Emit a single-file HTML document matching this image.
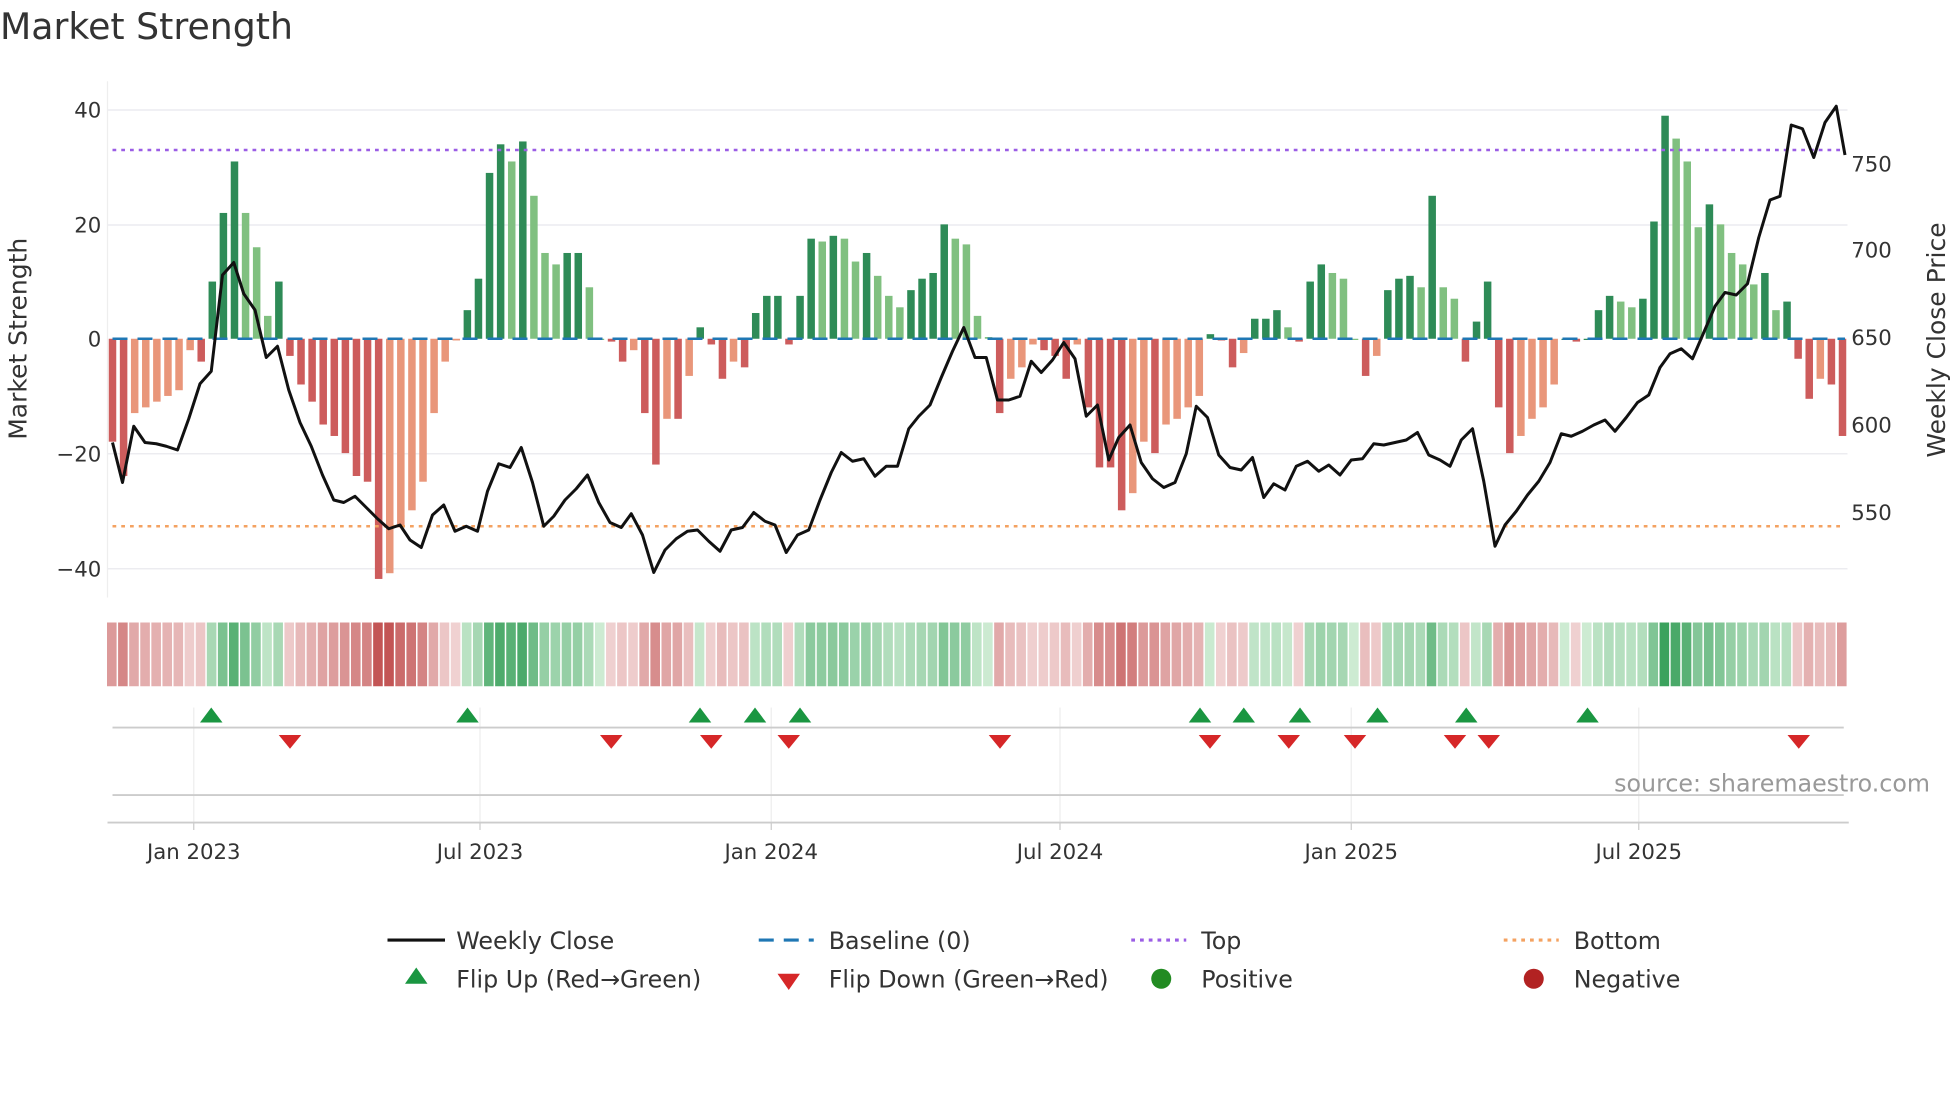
<!DOCTYPE html>
<html><head><meta charset="utf-8"><style>
html,body{margin:0;padding:0;background:#fff;width:1960px;height:1102px;overflow:hidden}
svg{display:block}
text{font-family:"DejaVu Sans","Liberation Sans",sans-serif;fill:#333}
</style></head><body>
<svg id="s" width="1960" height="1102" viewBox="0 0 1568 881.6" xmlns="http://www.w3.org/2000/svg">
<text x="0" y="31" font-size="29" fill="#333">Market Strength</text>
<line x1="86" y1="65" x2="86" y2="478" stroke="#eee" stroke-width="1"/>
<g stroke="#ececf0" stroke-width="1.2">
<line x1="86" y1="88" x2="1478" y2="88"/><line x1="86" y1="180" x2="1478" y2="180"/>
<line x1="86" y1="363" x2="1478" y2="363"/><line x1="86" y1="455" x2="1478" y2="455"/>
</g>
<g font-size="17" text-anchor="end">
<text x="81" y="94">40</text><text x="81" y="186">20</text><text x="81" y="277">0</text>
<text x="81" y="369">−20</text><text x="81" y="461">−40</text>
</g>
<g font-size="17">
<text x="1481" y="137">750</text><text x="1481" y="206">700</text><text x="1481" y="276">650</text>
<text x="1481" y="346">600</text><text x="1481" y="416">550</text>
</g>
<text font-size="20" transform="translate(21,271) rotate(-90)" text-anchor="middle">Market Strength</text>
<text font-size="20" transform="translate(1556,272) rotate(-90)" text-anchor="middle">Weekly Close Price</text>
<g id="bars"></g>
<line x1="90" y1="120" x2="1476" y2="120" stroke="#9b5de5" stroke-width="2" stroke-dasharray="3,4"/>
<line x1="90" y1="421" x2="1476" y2="421" stroke="#f4a261" stroke-width="2" stroke-dasharray="3,4"/>
<line x1="90" y1="271" x2="1476" y2="271" stroke="#1f77b4" stroke-width="2" stroke-dasharray="12,8"/>
<polyline id="price" fill="none" stroke="#111" stroke-width="2.4" stroke-linejoin="round"/>
<g id="heat"></g>
<g stroke="#eee" stroke-width="1">
<line x1="155" y1="566" x2="155" y2="658"/><line x1="384" y1="566" x2="384" y2="658"/>
<line x1="617" y1="566" x2="617" y2="658"/><line x1="848" y1="566" x2="848" y2="658"/>
<line x1="1081" y1="566" x2="1081" y2="658"/><line x1="1311" y1="566" x2="1311" y2="658"/>
</g>
<line x1="90" y1="582" x2="1475" y2="582" stroke="#ccc" stroke-width="1.5"/>
<line x1="90" y1="636" x2="1475" y2="636" stroke="#ccc" stroke-width="1.5"/>
<line x1="86" y1="658" x2="1479" y2="658" stroke="#ccc" stroke-width="1.5"/>
<g id="flips"></g>
<text x="1544" y="633" font-size="19" style="fill:#999" text-anchor="end">source: sharemaestro.com</text>
<g stroke="#ccc"><line x1="155" y1="658" x2="155" y2="664"/><line x1="384" y1="658" x2="384" y2="664"/><line x1="617" y1="658" x2="617" y2="664"/><line x1="848" y1="658" x2="848" y2="664"/><line x1="1081" y1="658" x2="1081" y2="664"/><line x1="1311" y1="658" x2="1311" y2="664"/></g>
<g font-size="17" text-anchor="middle">
<text x="155" y="687">Jan 2023</text><text x="384" y="687">Jul 2023</text><text x="617" y="687">Jan 2024</text>
<text x="848" y="687">Jul 2024</text><text x="1081" y="687">Jan 2025</text><text x="1311" y="687">Jul 2025</text>
</g>
<g font-size="19">
<line x1="310" y1="752" x2="356" y2="752" stroke="#111" stroke-width="2.5"/><text x="365" y="759">Weekly Close</text>
<line x1="607" y1="752" x2="651" y2="752" stroke="#1f77b4" stroke-width="2.5" stroke-dasharray="12,8"/><text x="663" y="759">Baseline (0)</text>
<line x1="905" y1="752" x2="949" y2="752" stroke="#9b5de5" stroke-width="2.5" stroke-dasharray="3,4"/><text x="961" y="759">Top</text>
<line x1="1203" y1="752" x2="1247" y2="752" stroke="#f4a261" stroke-width="2.5" stroke-dasharray="3,4"/><text x="1259" y="759">Bottom</text>
<polygon points="324,787 342,787 333,774" fill="#1a9641"/><text x="365" y="790">Flip Up (Red→Green)</text>
<polygon points="622,779 640,779 631,792" fill="#d62728"/><text x="663" y="790">Flip Down (Green→Red)</text>
<circle cx="929" cy="783" r="8" fill="#228b22"/><text x="961" y="790">Positive</text>
<circle cx="1227" cy="783" r="8" fill="#b22222"/><text x="1259" y="790">Negative</text>
</g>
</svg>
<script>
var v=[-18,-24,-13,-12,-11,-10,-9,-2,-4,10,22,31,22,16,4,10,-3,-8,-11,-15,-17,-20,-24,-25,-42,-41,-33,-30,-25,-13,-4,-0.3,5,10.5,29,34,31,34.5,25,15,13,15,15,9,0,-0.5,-4,-2,-13,-22,-14,-14,-6.5,2,-1,-7,-4,-5,4.5,7.5,7.5,-1,7.5,17.5,17,18,17.5,13.5,15,11,7.5,5.5,8.5,10.5,11.5,20,17.5,16.5,4,0.3,-13,-7,-5,-1,-2,-3,-7,-1,-12,-22.5,-22.5,-30,-27,-18,-20,-15,-14,-12,-10,0.8,-0.3,-5,-2.5,3.5,3.5,5,2,-0.5,10,13,11.5,10.5,0,-6.5,-3,8.5,10.5,11,9,25,9,7,-4,3,10,-12,-20,-17,-14,-12,-8,0,-0.5,0,5,7.5,6.5,5.5,7,20.5,39,35,31,19.5,23.5,20,15,13,9.5,11.5,5,6.5,-3.5,-10.5,-7,-8,-17];
var ns="http://www.w3.org/2000/svg",n=v.length,st=(1474-90)/(n-1);
function el(t,a,p){var e=document.createElementNS(ns,t);for(var k in a)e.setAttribute(k,a[k]);p.appendChild(e);}
var B=document.getElementById('bars'),H=document.getElementById('heat');
var sc=4.575;
for(var i=0;i<n;i++){var x=90+i*st,val=v[i],p=i?v[i-1]:0,c;
 if(val>=0)c=(val>=p)?'#2e8b57':'#80c080';else c=(val<=p)?'#cd5c5c':'#e9967a';
 var h=Math.abs(val)*sc,y=val>=0?271-h:271;el('rect',{x:x-3,y:y,width:6,height:Math.max(h,1),fill:c},B);
 var t=Math.min(Math.abs(val)/40,1),col;
 if(val>=0){col='rgb('+Math.round(205-150*t)+','+Math.round(235-75*t)+','+Math.round(210-120*t)+')';}
 else{col='rgb('+Math.round(240-45*t)+','+Math.round(210-125*t)+','+Math.round(210-125*t)+')';}
 el('rect',{x:x-4.4,y:498,width:st-1.2,height:51,fill:col},H);}
var pts=[[90,354],[98,386],[107,341],[116,354],[125,355],[133,357],[142,360],[151,335],[160,307],[169,297],[178,220],[187,210],[195,235],[204,248],[213,286],[222,277],[231,312],[240,338],[249,357],[258,380],[267,400],[275,402],[284,397],[293,406],[302,415],[311,423],[320,420],[328,432],[337,438],[346,412],[355,404],[364,425],[373,421],[382,425],[390,393],[399,371],[408,374],[417,358],[426,386],[435,421],[443,413],[452,400],[461,391],[470,380],[479,402],[488,418],[497,422],[505,411],[514,428],[523,458],[532,440],[541,431],[550,425],[558,424],[567,433],[576,441],[585,424],[594,422],[603,410],[612,417],[620,420],[629,442],[638,428],[647,424],[656,400],[665,378],[673,362],[682,369],[691,367],[700,381],[709,373],[718,373],[727,343],[735,333],[744,324],[753,302],[762,281],[771,262],[780,286],[789,286],[798,320],[807,320],[816,317],[825,289],[833,298],[842,288],[851,274],[860,287],[869,333],[878,324],[887,368],[895,350],[904,340],[913,370],[922,383],[931,390],[940,386],[949,363],[957,325],[966,334],[975,364],[984,374],[993,376],[1002,366],[1011,398],[1019,387],[1028,392],[1037,373],[1046,369],[1055,377],[1063,372],[1072,380],[1081,368],[1090,367],[1099,355],[1107,356],[1116,354],[1125,352],[1134,346],[1143,364],[1152,368],[1160,373],[1169,352],[1178,343],[1187,385],[1196,437],[1204,420],[1213,409],[1222,396],[1231,385],[1240,370],[1249,347],[1257,349],[1266,345],[1275,340],[1284,336],[1292,345],[1301,334],[1310,322],[1319,316],[1328,294],[1336,283],[1345,279],[1354,287],[1363,266],[1372,245],[1380,234],[1389,236],[1398,227],[1407,190],[1416,160],[1424,157],[1433,100],[1442,103],[1451,126],[1460,98],[1469,85],[1476,124]];
document.getElementById('price').setAttribute('points',pts.map(function(p){return p.join(',')}).join(' '));
var F=document.getElementById('flips');
[169,374,560,604,640,960,995,1040,1102,1173,1270].forEach(function(x){el('polygon',{points:(x-9)+',578 '+(x+9)+',578 '+x+',566',fill:'#1a9641'},F);});
[232,489,569,631,800,968,1031,1084,1164,1191,1439].forEach(function(x){el('polygon',{points:(x-9)+',588 '+(x+9)+',588 '+x+',599',fill:'#d62728'},F);});
</script>
</body></html>
